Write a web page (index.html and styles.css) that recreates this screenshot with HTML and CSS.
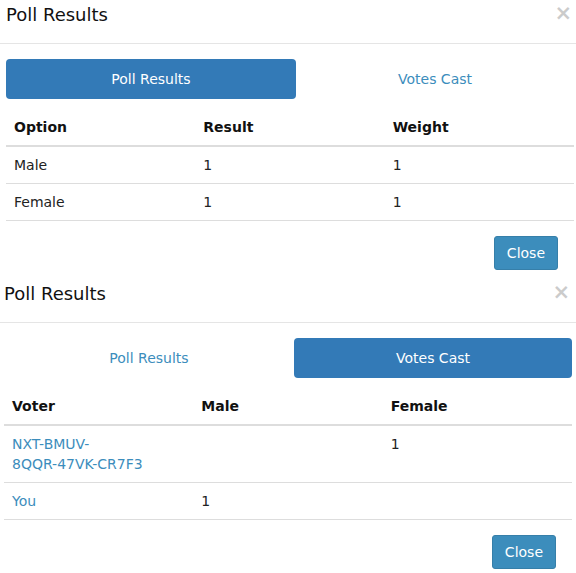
FILE: index.html
```html
<!DOCTYPE html>
<html>
<head>
<meta charset="utf-8">
<link rel="stylesheet" href="styles.css">
</head>
<body>
<div class="modal">
  <div class="modal-header">
    <h4 class="modal-title">Poll Results</h4>
    <button class="close" type="button">&times;</button>
  </div>
  <div class="modal-body">
    <div class="tabs">
      <a class="tab active">Poll Results</a>
      <a class="tab">Votes Cast</a>
    </div>
    <table class="table">
      <thead>
        <tr><th>Option</th><th>Result</th><th>Weight</th></tr>
      </thead>
      <tbody>
        <tr><td>Male</td><td>1</td><td>1</td></tr>
        <tr><td>Female</td><td>1</td><td>1</td></tr>
      </tbody>
    </table>
  </div>
  <div class="modal-footer">
    <button class="btn" type="button">Close</button>
  </div>
</div>

<div class="modal modal-shift">
  <div class="modal-header">
    <h4 class="modal-title">Poll Results</h4>
    <button class="close" type="button">&times;</button>
  </div>
  <div class="modal-body">
    <div class="tabs">
      <a class="tab">Poll Results</a>
      <a class="tab active">Votes Cast</a>
    </div>
    <table class="table">
      <thead>
        <tr><th>Voter</th><th>Male</th><th>Female</th></tr>
      </thead>
      <tbody>
        <tr><td><a class="link">NXT-BMUV-<br>8QQR-47VK-CR7F3</a></td><td></td><td>1</td></tr>
        <tr><td><a class="link">You</a></td><td>1</td><td></td></tr>
      </tbody>
    </table>
  </div>
  <div class="modal-footer">
    <button class="btn" type="button">Close</button>
  </div>
</div>
</body>
</html>
```
FILE: styles.css
```css
html, body {
  margin: 0;
  padding: 0;
  overflow: hidden;
  background: #fff;
}
body {
  font-family: "DejaVu Sans", sans-serif;
  font-size: 14px;
  line-height: 20px;
  color: #222;
}
.modal {
  width: 580px;
}
.modal-shift {
  margin-left: -2px;
}
.modal-header {
  display: flex;
  justify-content: space-between;
  align-items: flex-start;
  padding: 5px 8px 18px 6px;
  border-bottom: 1px solid #e5e5e5;
}
.modal-title {
  margin: 0;
  font-size: 18px;
  font-weight: normal;
  line-height: 20px;
  color: #111;
}
.close {
  margin: -2px 0 0 0;
  padding: 0;
  border: 0;
  background: none;
  font-family: "DejaVu Sans", sans-serif;
  font-size: 21px;
  font-weight: bold;
  line-height: 21px;
  color: #000;
  opacity: 0.2;
}
.modal-body {
  padding: 15px 6px 0 6px;
}
.tabs {
  display: grid;
  grid-template-columns: 290px 1fr;
}
.tab {
  display: block;
  padding: 10px 0;
  text-align: center;
  color: #3c8dbc;
  border-radius: 4px;
}
.tab.active {
  background: #337ab7;
  color: #fff;
}
.table {
  width: 100%;
  margin-top: 10px;
  border-collapse: collapse;
  table-layout: fixed;
}
.table th {
  text-align: left;
  font-weight: bold;
  color: #111;
  padding: 8px;
  border-bottom: 2px solid #ddd;
  vertical-align: bottom;
}
.table td {
  padding: 8px;
  border-bottom: 1px solid #ddd;
  vertical-align: top;
}
.link {
  color: #3c8dbc;
}
.modal-footer {
  display: flex;
  justify-content: flex-end;
  padding: 15px 22px 9px 6px;
}
.btn {
  font-family: "DejaVu Sans", sans-serif;
  font-size: 14px;
  line-height: 20px;
  padding: 6px 12px;
  color: #fff;
  background: #3c8dbc;
  border: 1px solid #367fa9;
  border-radius: 3px;
}
```
